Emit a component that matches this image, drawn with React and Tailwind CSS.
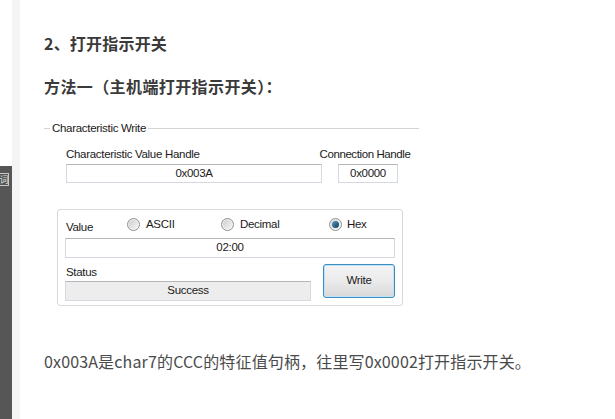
import React from "react";

const ui = { fontFamily: '"Liberation Sans", Arial, sans-serif' };
const cjk = { fontFamily: '"Noto Sans CJK SC", "Noto Sans", sans-serif' };

function Radio({ checked }) {
  return (
    <span className="relative inline-flex h-[13px] w-[13px] items-center justify-center rounded-full border border-[#8f8f8f] bg-gradient-to-br from-[#e6e6e6] to-[#fafafa]">
      <span className="h-[9px] w-[9px] rounded-full bg-gradient-to-br from-[#d0d0d0] to-[#f4f4f4]">
        {checked && (
          <span className="m-[1px] block h-[7px] w-[7px] rounded-full bg-gradient-to-br from-[#5d9bc4] to-[#0b3a5c]" />
        )}
      </span>
    </span>
  );
}

function TextBox({ className, children, bg = "bg-white" }) {
  return (
    <div
      className={`flex items-center justify-center border border-[#d5d8de] border-t-[#b4b6bc] text-[11.5px] leading-none tracking-[-0.3px] text-[#1a1a1a] ${bg} ${className}`}
    >
      {children}
    </div>
  );
}

export default function App() {
  return (
    <div className="flex min-h-[419px] w-[615px] bg-white">
      <div className="flex w-[12px] flex-col">
        <div className="h-[166px] bg-white" />
        <div className="flex-1 bg-[#565656] pt-[7px]">
          <div className="flex h-[13px] w-[9px] items-center justify-center overflow-hidden border border-l-0 border-[#c8c8c8] text-[9px] leading-none text-[#ddd]" style={cjk}>
            词
          </div>
        </div>
      </div>
      <div className="w-[8px] bg-[#f4f4f4]" />
      <div className="flex-1 pl-[24px]">
        <div className="pt-[31px] text-[16px] font-bold leading-[24px] tracking-[0.2px] text-[#3a3a3a]" style={cjk}>
          2、打开指示开关
        </div>
        <div className="mt-[19px] text-[16px] font-bold leading-[24px] tracking-[0.4px] text-[#3a3a3a]" style={cjk}>
          方法一（主机端打开指示开关）：
        </div>

        <div className="mt-[23px] w-[375px]" style={ui}>
          <div className="flex items-center">
            <div className="h-px w-[6px] bg-[#d5d5d5]" />
            <span className="px-[2px] text-[11.5px] leading-[14px] tracking-[-0.3px] text-[#1a1a1a]">
              Characteristic Write
            </span>
            <div className="h-px flex-1 bg-[#d5d5d5]" />
          </div>

          <div className="mt-[12px] flex pl-[22px]">
            <div className="w-[256px]">
              <div className="whitespace-nowrap text-[11.5px] leading-[14px] tracking-[-0.3px] text-[#1a1a1a]">
                Characteristic Value Handle
              </div>
              <TextBox className="mt-[3px] h-[19px] w-[256px]">0x003A</TextBox>
            </div>
            <div className="-ml-[3px] flex w-[92px] flex-col items-center">
              <div className="whitespace-nowrap text-[11.5px] leading-[14px] tracking-[-0.4px] text-[#1a1a1a]">
                Connection Handle
              </div>
              <TextBox className="ml-[6px] mt-[3px] h-[19px] w-[60px]">0x0000</TextBox>
            </div>
          </div>

          <div className="ml-[13px] mt-[26px] h-[97px] w-[346px] rounded-[3px] border border-[#d9d9d9] pl-[7px] pt-[7px]">
            <div className="flex items-start text-[11.5px] leading-[14px] tracking-[-0.3px] text-[#1a1a1a]">
              <span className="ml-[1px] mt-[3px] w-[61px]">Value</span>
              <span className="flex w-[94px] items-center gap-[6px]">
                <Radio />
                <span>ASCII</span>
              </span>
              <span className="flex w-[108px] items-center gap-[6px]">
                <Radio />
                <span>Decimal</span>
              </span>
              <span className="flex items-center gap-[5px]">
                <Radio checked />
                <span>Hex</span>
              </span>
            </div>
            <TextBox className="mt-[4px] h-[20px] w-[330px]">02:00</TextBox>
            <div className="flex">
              <div className="w-[246px]">
                <div className="ml-[1px] mt-[7px] text-[11.5px] leading-[14px] tracking-[-0.3px] text-[#1a1a1a]">
                  Status
                </div>
                <TextBox className="mt-[2px] h-[20px] w-[246px]" bg="bg-[#ededed]">
                  Success
                </TextBox>
              </div>
              <div className="ml-[12px] mt-[6px] flex h-[34px] w-[72px] items-center justify-center rounded-[3px] border border-[#3c8cc0] bg-gradient-to-b from-[#f4f4f4] via-[#ebebeb] to-[#d8d8d8] text-[11.5px] leading-none tracking-[-0.3px] text-[#1a1a1a] shadow-[inset_0_0_0_1px_#bfe3f7]">
                Write
              </div>
            </div>
          </div>
        </div>

        <div className="mt-[43px] text-[16px] leading-[24px] tracking-[0.15px] text-[#4a4a4a]" style={cjk}>
          0x003A是char7的CCC的特征值句柄，往里写0x0002打开指示开关。
        </div>
      </div>
    </div>
  );
}
